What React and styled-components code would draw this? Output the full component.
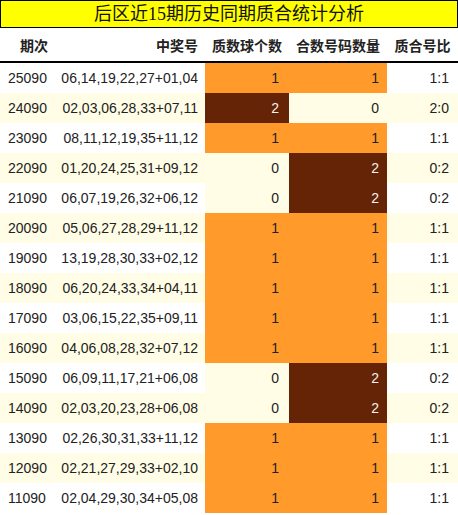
import React from 'react';
import styled, { createGlobalStyle } from 'styled-components';

const rows = [
  ['25090', '06,14,19,22,27+01,04', 1, 1],
  ['24090', '02,03,06,28,33+07,11', 2, 0],
  ['23090', '08,11,12,19,35+11,12', 1, 1],
  ['22090', '01,20,24,25,31+09,12', 0, 2],
  ['21090', '06,07,19,26,32+06,12', 0, 2],
  ['20090', '05,06,27,28,29+11,12', 1, 1],
  ['19090', '13,19,28,30,33+02,12', 1, 1],
  ['18090', '06,20,24,33,34+04,11', 1, 1],
  ['17090', '03,06,15,22,35+09,11', 1, 1],
  ['16090', '04,06,08,28,32+07,12', 1, 1],
  ['15090', '06,09,11,17,21+06,08', 0, 2],
  ['14090', '02,03,20,23,28+06,08', 0, 2],
  ['13090', '02,26,30,31,33+11,12', 1, 1],
  ['12090', '02,21,27,29,33+02,10', 1, 1],
  ['11090', '02,04,29,30,34+05,08', 1, 1],
];

const GlobalStyle = createGlobalStyle`
  body {
    margin: 0;
    background: #ffffff;
    font-family: "Liberation Sans", "Noto Sans CJK SC", sans-serif;
  }
`;

const Wrapper = styled.div`
  width: 458px;
`;

const Title = styled.div`
  height: 26px;
  border: 1px solid #000;
  background: #ffff00;
  color: #111;
  font-family: "Liberation Serif", "Noto Sans CJK SC", serif;
  font-size: 18px;
  line-height: 26px;
  text-align: center;
`;

const Grid = styled.div`
  display: grid;
  grid-template-columns: 58px 147px 84px 98px 71px;
`;

const Head = styled.div`
  height: 33px;
  border-bottom: 2px solid #000;
  display: flex;
  align-items: center;
  justify-content: ${(p) => p.$align || 'center'};
  padding: ${(p) => p.$pad || '0'};
  font-weight: bold;
  font-size: 14px;
  color: #222;
`;

const Cell = styled.div`
  height: 30px;
  display: flex;
  align-items: center;
  justify-content: ${(p) => p.$align || 'flex-end'};
  padding: ${(p) => p.$pad || '0 8px 0 0'};
  font-size: 14px;
  color: ${(p) => (p.$dark ? '#f2f2f2' : '#222')};
  background: ${(p) => p.$bg};
`;

const bgFor = (v) => {
  if (v === 2) return '#652405';
  if (v === 1) return '#ff9a2b';
  return '#fffde6';
};

export default function App() {
  return (
    <Wrapper>
      <GlobalStyle />
      <Title>后区近15期历史同期质合统计分析</Title>
      <Grid>
        <Head $align="flex-start" $pad="0 0 0 20px">期次</Head>
        <Head $align="flex-end" $pad="0 7px 0 0">中奖号</Head>
        <Head>质数球个数</Head>
        <Head>合数号码数量</Head>
        <Head>质合号比</Head>
        {rows.map(([issue, nums, p, c], i) => {
          const rowBg = i % 2 === 0 ? '#ffffff' : '#fffde6';
          return (
            <React.Fragment key={issue}>
              <Cell $bg={rowBg} $align="flex-start" $pad="0 0 0 8px">{issue}</Cell>
              <Cell $bg={rowBg} $pad="0 7px 0 0">{nums}</Cell>
              <Cell $bg={bgFor(p)} $dark={p === 2} $pad="0 10px 0 0">{p}</Cell>
              <Cell $bg={bgFor(c)} $dark={c === 2} $pad="0 8px 0 0">{c}</Cell>
              <Cell $bg={rowBg} $pad="0 9px 0 0">{p}:{c}</Cell>
            </React.Fragment>
          );
        })}
      </Grid>
    </Wrapper>
  );
}
